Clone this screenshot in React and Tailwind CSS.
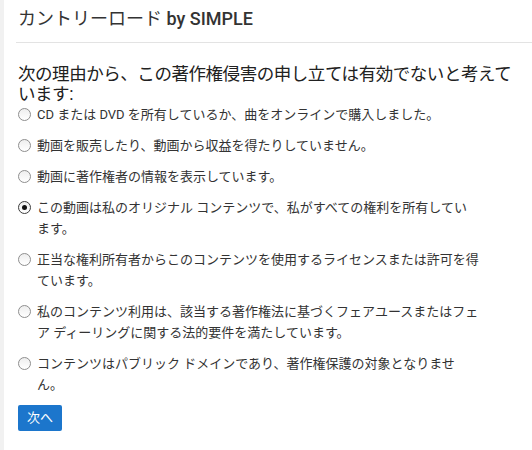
import React from "react";

const options = [
  ["CD または DVD を所有しているか、曲をオンラインで購入しました。"],
  ["動画を販売したり、動画から収益を得たりしていません。"],
  ["動画に著作権者の情報を表示しています。"],
  ["この動画は私のオリジナル コンテンツで、私がすべての権利を所有してい", "ます。"],
  ["正当な権利所有者からこのコンテンツを使用するライセンスまたは許可を得", "ています。"],
  ["私のコンテンツ利用は、該当する著作権法に基づくフェアユースまたはフェ", "ア ディーリングに関する法的要件を満たしています。"],
  ["コンテンツはパブリック ドメインであり、著作権保護の対象となりませ", "ん。"],
];

function Radio({ checked }) {
  return (
    <span
      className={
        "mt-[4px] flex h-[13px] w-[13px] shrink-0 items-center justify-center rounded-full border bg-gradient-to-b from-[#eeeeee] to-[#ffffff] " +
        (checked ? "border-[#3c3c3c]" : "border-[#8e8e8e]")
      }
    >
      {checked && <span className="h-[5px] w-[5px] rounded-full bg-[#111111]" />}
    </span>
  );
}

export default function App() {
  return (
    <div
      className="flex h-[450px] w-[532px] bg-white"
      style={{ fontFamily: 'Roboto, "Noto Sans CJK JP", sans-serif' }}
    >
      <div className="w-[4px] shrink-0 bg-[#f1f1f1]" />
      <div className="ml-[12px] flex flex-1 flex-col">
        <div className="pl-[2px] pt-[7px] pb-[11px] text-[18px] leading-[24px] text-[#333333]">
          カントリーロード <span className="font-medium">by SIMPLE</span>
        </div>
        <div className="h-px bg-[#e3e3e3]" />
        <div className="mt-[21px] pl-[2px] text-[17.5px] leading-[20px] tracking-[-0.45px] text-[#212121]">
          次の理由から、この著作権侵害の申し立ては有効でないと考えて
          <br />
          います:
        </div>
        <div className="flex flex-col gap-[10px] pl-[2px]">
          {options.map((lines, i) => (
            <div key={i} className="flex items-start gap-[6px]">
              <Radio checked={i === 3} />
              <span className="flex w-[460px] flex-col text-[13px] leading-[21px] text-[#333333]">
                {lines.map((l, j) => (
                  <span key={j} className="whitespace-nowrap">
                    {l}
                  </span>
                ))}
              </span>
            </div>
          ))}
          <button className="flex h-[26px] w-[44px] items-center justify-center rounded-[2px] bg-[#1c76cc] text-[13px] text-white">
            次へ
          </button>
        </div>
      </div>
    </div>
  );
}
